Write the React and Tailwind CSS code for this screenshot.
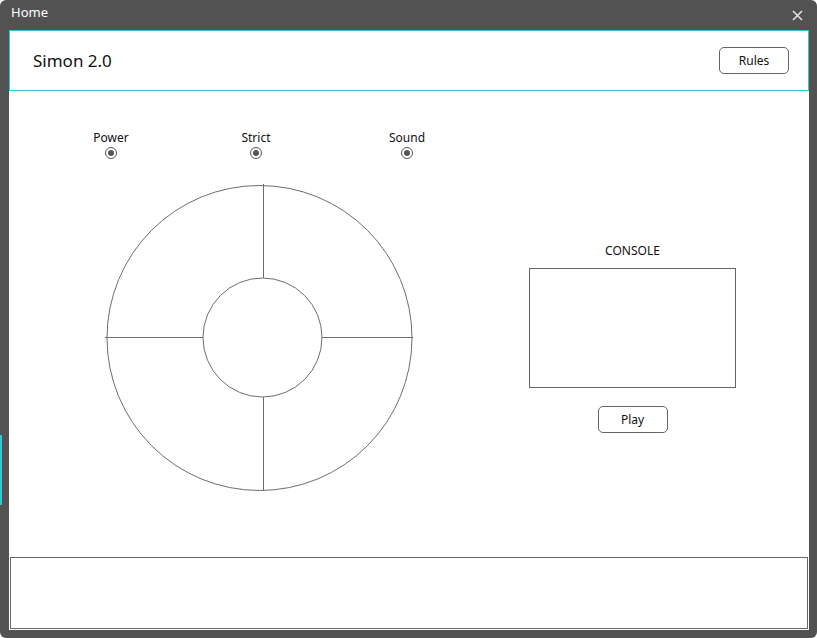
import React from 'react';

const font = { fontFamily: '"Noto Sans", "Open Sans", sans-serif' };

function Radio({ label }) {
  return (
    <div className="w-[60px] flex flex-col items-center">
      <span className="text-[12px] leading-[16px] text-[#111]">{label}</span>
      <span className="mt-[1px] w-[12px] h-[12px] rounded-full border border-[#555] flex items-center justify-center">
        <span className="w-[6px] h-[6px] rounded-full bg-[#555]" />
      </span>
    </div>
  );
}

function Wheel() {
  return (
    <svg width="310" height="310" viewBox="0 0 310 310" className="ml-[96px] mt-[24px]">
      <g stroke="#6e6e6e" strokeWidth="1" fill="none">
        <circle cx="154.5" cy="155" r="152.5" />
        <circle cx="157.5" cy="154.5" r="59.5" />
        <line x1="158.5" y1="1" x2="158.5" y2="95" />
        <line x1="158.5" y1="214" x2="158.5" y2="308" />
        <line x1="0" y1="154.5" x2="98" y2="154.5" />
        <line x1="217" y1="154.5" x2="308" y2="154.5" />
      </g>
    </svg>
  );
}

export default function App() {
  return (
    <div className="w-[817px] h-[638px] bg-[#525252] rounded-[6px] flex flex-col relative" style={font}>
      <div className="h-[30px] flex items-center justify-between pl-[11px] pr-[14px] pb-[4px]">
        <span className="text-[13px] text-white">Home</span>
        <svg width="11" height="11" viewBox="0 0 11 11" className="mt-[4px]">
          <path d="M1 1 L10 10 M10 1 L1 10" stroke="#e0e0e0" strokeWidth="1.6" />
        </svg>
      </div>

      <div className="ml-[9px] w-[800px] h-[600px] bg-white flex flex-col">
        <div className="h-[61px] border border-[#33c6d8] flex items-center justify-between pl-[23px] pr-[19px]">
          <span className="text-[17px] text-[#111] mt-[1px]">Simon 2.0</span>
          <button className="w-[70px] h-[27px] rounded-[5px] border border-[#666] text-[12px] text-[#111] bg-white">
            Rules
          </button>
        </div>

        <div className="flex-1 flex">
          <div className="flex flex-col pt-[39px]">
            <div className="flex ml-[72px] gap-[85px]">
              <Radio label="Power" />
              <Radio label="Strict" />
              <div className="ml-[6px]">
                <Radio label="Sound" />
              </div>
            </div>
            <Wheel />
          </div>

          <div className="ml-auto mr-[73px] w-[207px] flex flex-col items-center pt-[152px]">
            <span className="text-[12px] leading-[16px] text-[#111]">CONSOLE</span>
            <div className="mt-[9px] w-[207px] h-[120px] border border-[#666]" />
            <button className="mt-[18px] w-[70px] h-[27px] rounded-[5px] border border-[#666] text-[12px] text-[#111] bg-white">
              Play
            </button>
          </div>
        </div>

        <div className="mx-[1px] mb-[1px] h-[72px] border border-[#666]" />
      </div>

      <div className="absolute left-0 top-[435px] w-[2px] h-[70px] bg-[#33c6d8]" />
    </div>
  );
}
